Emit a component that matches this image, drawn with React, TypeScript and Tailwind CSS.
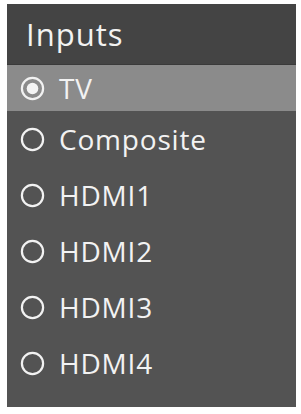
import React from 'react';

const inputs = ['Composite', 'HDMI1', 'HDMI2', 'HDMI3', 'HDMI4'];

function Radio({ checked }: { checked?: boolean }) {
  return (
    <svg width="25" height="25" viewBox="0 0 25 25" className="shrink-0">
      <circle cx="12.5" cy="12.5" r="10.6" fill="none" stroke="#f2f2f2" strokeWidth="2.2" />
      {checked && <circle cx="12.5" cy="12.5" r="5.8" fill="#f4f4f4" />}
    </svg>
  );
}

export default function App() {
  return (
    <div className="w-[301px] h-[414px] bg-white pt-[4px] pl-[7px]">
      <div
        className="w-[289px] h-[403px] bg-[#535353] flex flex-col text-[#f2f2f2]"
        style={{ fontFamily: '"Open Sans", "Noto Sans", sans-serif' }}
      >
        <div className="h-[61px] bg-[#444444] flex items-center pl-[19px] text-[31px] tracking-[1px] border-b border-[#3a3a3a]">
          Inputs
        </div>
        <div className="h-[46px] bg-[#8b8b8b] flex items-center gap-[14px] pl-[13px] text-[28px] font-medium tracking-[0.8px]">
          <Radio checked />
          <span>TV</span>
        </div>
        {inputs.map((name) => (
          <div key={name} className="h-[56px] flex items-center gap-[14px] pl-[13px] text-[28px] font-medium tracking-[0.8px]">
            <Radio />
            <span>{name}</span>
          </div>
        ))}
      </div>
    </div>
  );
}
